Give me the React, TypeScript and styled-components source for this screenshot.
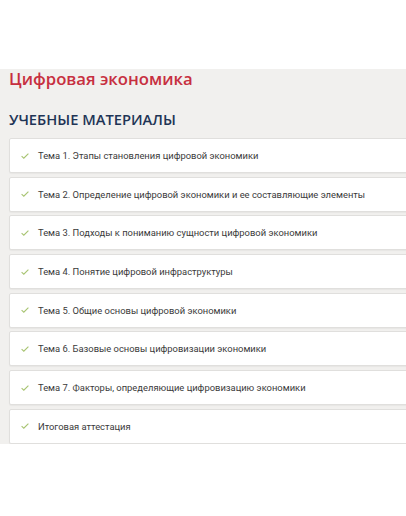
import styled, { createGlobalStyle } from 'styled-components'

const GlobalStyle = createGlobalStyle`
  html, body {
    margin: 0;
    padding: 0;
    background: #ffffff;
    overflow-x: hidden;
  }

  body {
    font-family: 'Open Sans', 'Noto Sans', sans-serif;
  }
`

const Page = styled.div`
  padding-top: 69px;
`

const Panel = styled.section`
  background: #f1f0ee;
  padding-left: 9px;
`

const Title = styled.h1`
  margin: 0;
  font-size: 16.7px;
  line-height: 20px;
  font-weight: 600;
  color: #c72f40;
`

const Subtitle = styled.h2`
  margin: 20px 0 0;
  font-size: 14.7px;
  line-height: 20px;
  font-weight: 600;
  color: #1f3556;
  text-transform: uppercase;
`

const List = styled.ul`
  list-style: none;
  margin: 9px -6px 0 0;
  padding: 0;
  display: flex;
  flex-direction: column;
  gap: 3.7px;
`

const Item = styled.li`
  box-sizing: border-box;
  height: 35px;
  display: flex;
  align-items: center;
  gap: 9px;
  padding-left: 11px;
  background: #ffffff;
  border: 1px solid #e0dfdd;
  border-radius: 2px;
  box-shadow: 0 1px 1px rgba(0, 0, 0, 0.04);
  font-family: Roboto, 'Open Sans', sans-serif;
  font-size: 9.4px;
  color: #3a3a3a;
`

const Check = styled.svg`
  width: 8px;
  height: 6px;
  flex-shrink: 0;
`

const topics = [
  'Тема 1. Этапы становления цифровой экономики',
  'Тема 2. Определение цифровой экономики и ее составляющие элементы',
  'Тема 3. Подходы к пониманию сущности цифровой экономики',
  'Тема 4. Понятие цифровой инфраструктуры',
  'Тема 5. Общие основы цифровой экономики',
  'Тема 6. Базовые основы цифровизации экономики',
  'Тема 7. Факторы, определяющие цифровизацию экономики',
  'Итоговая аттестация',
]

function CheckIcon() {
  return (
    <Check viewBox="0 0 8 6">
      <polyline points="0.6,3.2 2.8,5.2 7.4,0.6" fill="none" stroke="#a8c472" strokeWidth="1.1" />
    </Check>
  )
}

export default function App() {
  return (
    <>
      <GlobalStyle />
      <Page>
        <Panel>
          <Title>Цифровая экономика</Title>
          <Subtitle>Учебные материалы</Subtitle>
          <List>
            {topics.map((topic) => (
              <Item key={topic}>
                <CheckIcon />
                {topic}
              </Item>
            ))}
          </List>
        </Panel>
      </Page>
    </>
  )
}
